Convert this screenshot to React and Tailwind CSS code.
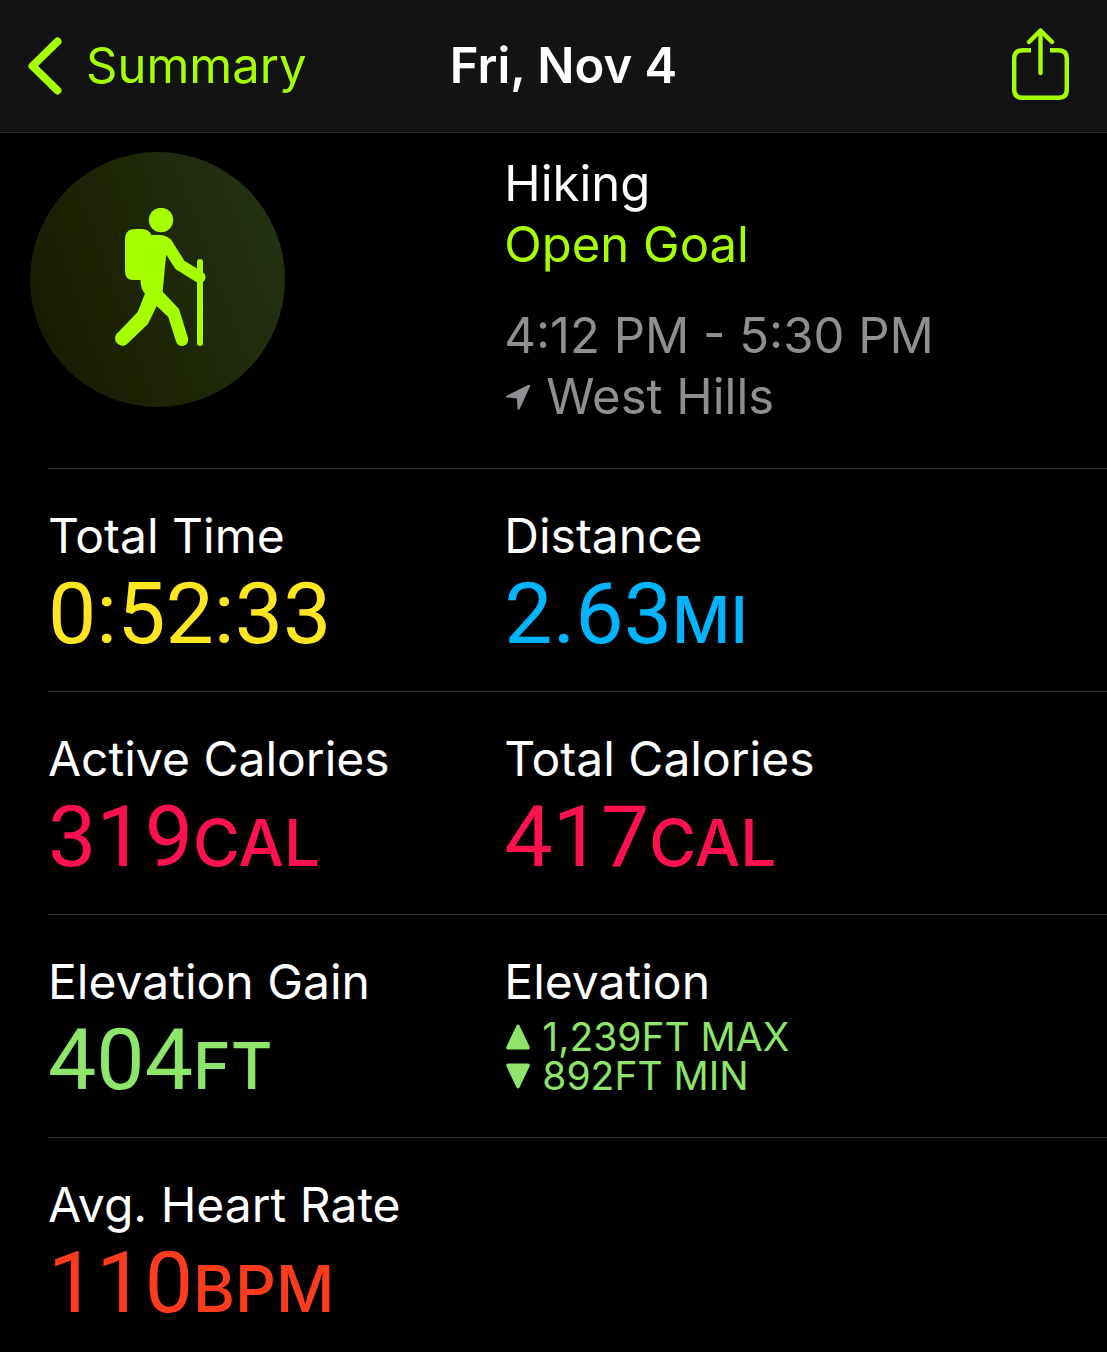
import React from "react";

const metrics = [
  [
    { label: "Total Time", value: "0:52:33", unit: "", color: "text-[#ffe620]" },
    { label: "Distance", value: "2.63", unit: "MI", color: "text-[#00b4ff]" },
  ],
  [
    { label: "Active Calories", value: "319", unit: "CAL", color: "text-[#ff1150]" },
    { label: "Total Calories", value: "417", unit: "CAL", color: "text-[#ff1150]" },
  ],
  [
    { label: "Elevation Gain", value: "404", unit: "FT", color: "text-[#8de569]" },
    { label: "Elevation", range: { max: "1,239FT MAX", min: "892FT MIN" } },
  ],
  [{ label: "Avg. Heart Rate", value: "110", unit: "BPM", color: "text-[#ff3b1d]" }],
];

const ChevronIcon = () => (
  <svg width="34" height="58" viewBox="0 0 34 58" fill="none" aria-hidden="true">
    <path
      d="M29.5 4.5L4.5 29L29.5 53.5"
      stroke="currentColor"
      strokeWidth="8"
      strokeLinecap="round"
      strokeLinejoin="round"
    />
  </svg>
);

const ShareIcon = () => (
  <svg width="57" height="76" viewBox="0 0 57 76" fill="none" aria-hidden="true">
    <g stroke="currentColor" strokeWidth="4.4">
      <path d="M19 22.3H10.5Q2.2 22.3 2.2 30.5V61.5Q2.2 69.8 10.5 69.8H46.5Q54.8 69.8 54.8 61.5V30.5Q54.8 22.3 46.5 22.3H38" />
      <path
        d="M28.5 45V2.5M17 14L28.5 2.5L40 14"
        strokeLinecap="round"
        strokeLinejoin="round"
      />
    </g>
  </svg>
);

const HikerIcon = () => (
  <svg width="97" height="143" viewBox="-6 0 97 143" fill="currentColor" aria-hidden="true">
    <circle cx="46" cy="12" r="12.2" />
    {/* backpack and torso */}
    <path d="M20 21H27Q34 21 36.5 27H45Q53 27 58 35L51 48L47.5 85L30 86Q25.5 80 25.5 72H18Q10 72 10 63V32Q10 21 20 21Z" />
    {/* arm and pole */}
    <g fill="none" stroke="currentColor" strokeLinecap="round">
      <path d="M51 35L65 57L84.5 69" strokeWidth="12" strokeLinejoin="round" />
      <path d="M85 54V135" strokeWidth="6" />
    </g>
    {/* legs */}
    <path d="M31 83L22.7 104L3.5 124A6.2 6.2 0 0 0 11.5 136.5L33 116L41.7 98L53.3 109L61 133.5A6.2 6.2 0 0 0 73 130L64 101L47 83Z" />
  </svg>
);

const LocationIcon = () => (
  <svg width="24" height="26" viewBox="0 0 24 26" fill="currentColor" aria-hidden="true">
    <path d="M1 11.5L22 1Q24.5 0 24 2.5L14 24.5Q12.5 27 11.5 24.5L11 14.5L1 13.5Q-1 12.5 1 11.5Z" />
  </svg>
);

const TriangleIcon = ({ down }) => (
  <svg
    width="24"
    height="26"
    viewBox="0 0 24 26"
    fill="currentColor"
    className={down ? "rotate-180" : ""}
    aria-hidden="true"
  >
    <path d="M10.5 1.5Q12 -0.5 13.5 1.5L23.5 22.5Q24.5 25.5 22 25.5H2Q-0.5 25.5 0.5 22.5Z" />
  </svg>
);

const Metric = ({ metric }) => (
  <div>
    <dt className="text-[48px] leading-[60px]">{metric.label}</dt>
    {metric.range ? (
      <dd className="text-[39px] leading-[39px] text-[#8de569] pt-[5px]">
        <span className="flex items-center gap-3 pl-0.5">
          <TriangleIcon />
          {metric.range.max}
        </span>
        <span className="flex items-center gap-3 pl-0.5">
          <TriangleIcon down />
          {metric.range.min}
        </span>
      </dd>
    ) : (
      <dd className={`font-[Roboto,sans-serif] text-[86px] leading-[96px] ${metric.color}`}>
        {metric.value}
        <span className="font-[Inter,sans-serif] text-[64px] leading-[60px] font-medium">
          {metric.unit}
        </span>
      </dd>
    )}
  </div>
);

const Divider = () => <hr className="ml-12 border-[#343436]" />;

export default function App() {
  return (
    <div className="min-h-screen bg-black text-white font-[Inter,sans-serif]">
      <header className="grid grid-cols-[1fr_auto_1fr] items-center h-[133px] pl-7 pr-2 bg-[#131313] border-b border-[#29292b]">
        <button className="flex items-center gap-6 justify-self-start text-[49px] leading-[60px] text-[#a6ff00]">
          <ChevronIcon />
          Summary
        </button>
        <h1 className="text-[49px] leading-[60px] font-semibold">Fri, Nov 4</h1>
        <button aria-label="Share" className="justify-self-end pr-[30px] text-[#a6ff00]">
          <ShareIcon />
        </button>
      </header>

      <main>
        <section className="grid grid-cols-[41fr_49fr] pt-[19px] pb-[41px]">
          <div className="pl-[30px]">
            <div className="flex items-center justify-center size-[255px] rounded-full bg-linear-70 from-[#181900] to-[#253415] text-[#a6ff00]">
              <HikerIcon />
            </div>
          </div>
          <div className="pt-px text-[49px] leading-[61px]">
            <h2>Hiking</h2>
            <p className="text-[#a6ff00]">Open Goal</p>
            <div className="pt-[30px] text-[#8e8e93]">
              <p>4:12 PM - 5:30 PM</p>
              <p className="flex items-center gap-4 pl-0.5">
                <LocationIcon />
                West Hills
              </p>
            </div>
          </div>
        </section>

        {metrics.map((row) => (
          <React.Fragment key={row[0].label}>
            <Divider />
            <dl className="grid grid-cols-[41fr_49fr] pt-[37px] pb-[29px] [&>*:first-child]:pl-12">
              {row.map((metric) => (
                <Metric key={metric.label} metric={metric} />
              ))}
            </dl>
          </React.Fragment>
        ))}
      </main>
    </div>
  );
}
